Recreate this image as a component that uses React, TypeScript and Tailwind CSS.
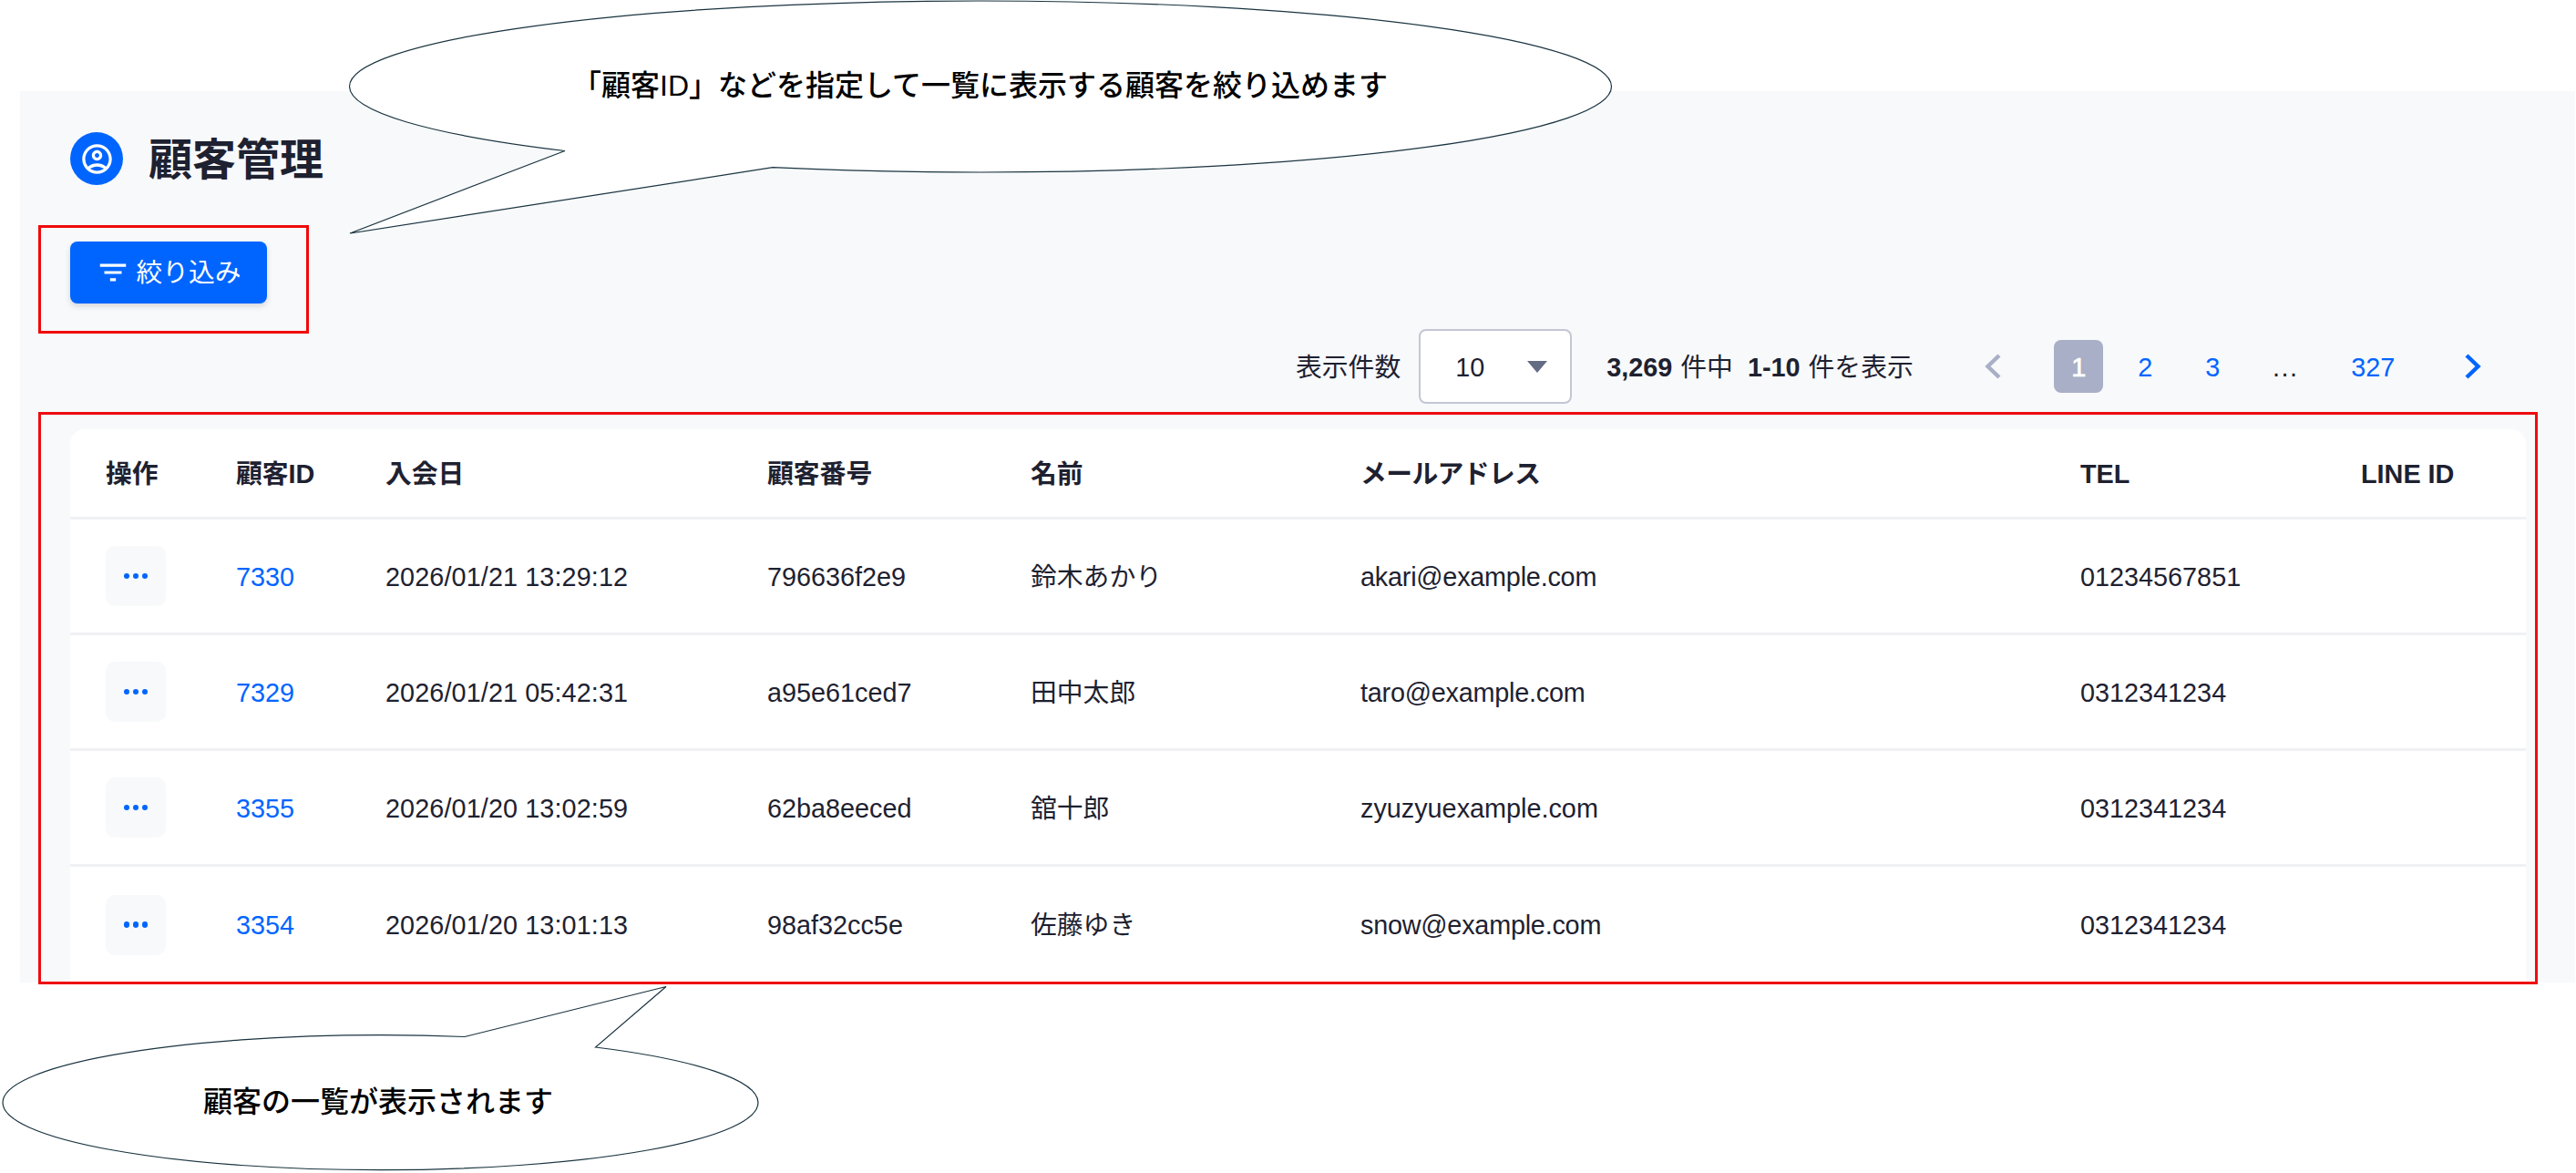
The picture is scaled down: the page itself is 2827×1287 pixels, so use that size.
import React from "react";
import { MdFilterList, MdOutlineAccountCircle } from "react-icons/md";

const columns = [
  "操作",
  "顧客ID",
  "入会日",
  "顧客番号",
  "名前",
  "メールアドレス",
  "TEL",
  "LINE ID",
];

const customers = [
  {
    id: 7330,
    joinedAt: "2026/01/21 13:29:12",
    code: "796636f2e9",
    name: "鈴木あかり",
    email: "akari@example.com",
    tel: "01234567851",
  },
  {
    id: 7329,
    joinedAt: "2026/01/21 05:42:31",
    code: "a95e61ced7",
    name: "田中太郎",
    email: "taro@example.com",
    tel: "0312341234",
  },
  {
    id: 3355,
    joinedAt: "2026/01/20 13:02:59",
    code: "62ba8eeced",
    name: "舘十郎",
    email: "zyuzyuexample.com",
    tel: "0312341234",
  },
  {
    id: 3354,
    joinedAt: "2026/01/20 13:01:13",
    code: "98af32cc5e",
    name: "佐藤ゆき",
    email: "snow@example.com",
    tel: "0312341234",
  },
];

const gridCols =
  "grid grid-cols-[143px_164px_419px_289px_362px_790px_308px_1fr] items-center pl-[39px] [&>a]:pt-0.5 [&>span]:pt-0.5";

function PageHeader() {
  return (
    <header className="flex items-center gap-[28px] h-[58px]">
      <div className="flex items-center justify-center size-[58px] rounded-full bg-[#0065ff]">
        <MdOutlineAccountCircle className="size-[39px] text-white" />
      </div>
      <h1 className="pt-[3px] text-[48px] leading-none font-bold">顧客管理</h1>
    </header>
  );
}

function Chevron({ className, flip }: { className: string; flip?: boolean }) {
  return (
    <svg viewBox="0 0 18 28" className={className} fill="none">
      <path
        d={flip ? "M2 2 L14.5 14 L2 26" : "M16 2 L3.5 14 L16 26"}
        stroke="currentColor"
        strokeWidth="4.4"
      />
    </svg>
  );
}

function Pagination() {
  return (
    <nav className="flex items-center ml-[78px] text-[#0065ff]">
      <Chevron className="w-[18px] h-[28px] mr-[58px] text-[#a9afc6]" />
      <span className="flex items-center justify-center w-[54px] h-[58px] pt-0.5 rounded-lg bg-[#a9afc6] text-white [-webkit-text-stroke:0.7px_#fff]">
        1
      </span>
      <a className="w-[54px] ml-[19px] pt-0.5 text-center">2</a>
      <a className="w-[54px] ml-5 pt-0.5 text-center">3</a>
      <span className="w-[54px] ml-[26px] pt-0.5 text-center tracking-[1.4px] text-[#1e2130]">...</span>
      <a className="w-[74px] ml-8 pt-0.5 text-center">327</a>
      <Chevron flip className="w-[18px] h-[28px] ml-16" />
    </nav>
  );
}

function Toolbar() {
  return (
    <div className="flex items-center h-[82px] mt-7 pl-[1345px] whitespace-nowrap">
      <span className="pt-0.5">表示件数</span>
      <div className="flex items-center justify-between w-[168px] h-[82px] ml-5 pl-[38px] pr-[25px] bg-white border-2 border-[#c3c7d4] rounded-lg">
        <span className="pt-0.5">10</span>
        <svg viewBox="0 0 22 13" className="w-[22px] h-[13px]">
          <path d="M0 0 H22 L11 13 Z" fill="#636b85" />
        </svg>
      </div>
      <div className="flex items-center ml-[38px] w-[337px] pt-0.5">
        <b>3,269</b>
        <span className="ml-[9px]">件中</span>
        <b className="ml-4">1-10</b>
        <span className="ml-[9px]">件を表示</span>
      </div>
      <Pagination />
    </div>
  );
}

function CustomerTable() {
  return (
    <div className="mt-7 w-[2695px] rounded-t-2xl bg-white">
      <div className={`${gridCols} h-[99px] border-b-[3px] border-[#f0f1f5] font-bold`}>
        {columns.map((label) => (
          <span key={label} className={label === "メールアドレス" ? "tracking-[-0.6px]" : ""}>
            {label}
          </span>
        ))}
      </div>
      {customers.map((c) => (
        <div
          key={c.id}
          className={`${gridCols} h-[127px] border-b-[3px] border-[#f0f1f5] last:border-b-0`}
        >
          <button className="flex items-center justify-center gap-[3.5px] size-[66px] rounded-[10px] bg-[#f7f9fb]">
            <i className="size-[6.5px] rounded-full bg-[#0065ff]" />
            <i className="size-[6.5px] rounded-full bg-[#0065ff]" />
            <i className="size-[6.5px] rounded-full bg-[#0065ff]" />
          </button>
          <a className="text-[#0065ff]">{c.id}</a>
          <span className="tracking-[0.1px]">{c.joinedAt}</span>
          <span>{c.code}</span>
          <span>{c.name}</span>
          <span className={c.email.includes("@") ? "tracking-[-0.22px]" : ""}>{c.email}</span>
          <span>{c.tel}</span>
          <span />
        </div>
      ))}
    </div>
  );
}

function FilterCallout() {
  return (
    <div className="absolute left-0 top-0 w-[1780px] h-[260px]">
      <svg viewBox="0 0 1780 260" className="absolute inset-0 size-full">
        <path
          d="M620 165.5 A692.5 94 0 0 1 383.5 95 A692.5 94 0 0 1 1076 1 A692.5 94 0 0 1 1768.5 95 A692.5 94 0 0 1 1076 189 A692.5 94 0 0 1 848 183.7 L384 256 Z"
          fill="#fff"
          stroke="#1a3440"
          strokeWidth="1.2"
        />
      </svg>
      <p className="relative flex items-center h-[188px] pl-[628px] text-[32px] font-medium text-black whitespace-nowrap">
        「顧客ID」などを指定して一覧に表示する顧客を絞り込めます
      </p>
    </div>
  );
}

function ListCallout() {
  return (
    <div className="absolute left-0 top-[1080px] w-[840px] h-[207px]">
      <svg viewBox="0 0 840 207" className="absolute inset-0 size-full">
        <path
          d="M510 57.5 A414.5 74 0 0 0 417.5 55.7 A414.5 74 0 0 0 3 129.7 A414.5 74 0 0 0 417.5 203.7 A414.5 74 0 0 0 832 129.7 A414.5 74 0 0 0 653.5 69 L731 2.5 Z"
          fill="#fff"
          stroke="#1a3440"
          strokeWidth="1.2"
        />
      </svg>
      <p className="relative flex items-center h-[258px] pl-[223px] text-[32px] font-medium text-black whitespace-nowrap">
        顧客の一覧が表示されます
      </p>
    </div>
  );
}

export default function App() {
  return (
    <div
      lang="ja"
      className="relative w-[2827px] h-[1287px] overflow-hidden bg-white pt-[100px] pl-[22px] font-['Liberation_Sans','Noto_Sans_CJK_JP',sans-serif] text-[28.8px] leading-none text-[#1e2130]"
    >
      <main className="w-[2804px] h-[978px] overflow-hidden bg-[#f7f9fb] pt-[45px] pl-[55px]">
        <PageHeader />
        <button className="flex items-center justify-center gap-1.5 w-[216px] h-[68px] mt-[62px] rounded-lg bg-[#0065ff] text-white shadow-[0_3px_6px_rgba(30,33,48,0.16)]">
          <MdFilterList className="size-[38px]" />
          <span className="pt-px">絞り込み</span>
        </button>
        <Toolbar />
        <CustomerTable />
      </main>

      {/* highlight frames */}
      <div className="absolute left-[42px] top-[247px] w-[297px] h-[119px] border-[3px] border-[#f00a0a]" />
      <div className="absolute left-[42px] top-[452px] w-[2743px] h-[628px] border-[3px] border-[#ee0c10]" />

      <FilterCallout />
      <ListCallout />
    </div>
  );
}
